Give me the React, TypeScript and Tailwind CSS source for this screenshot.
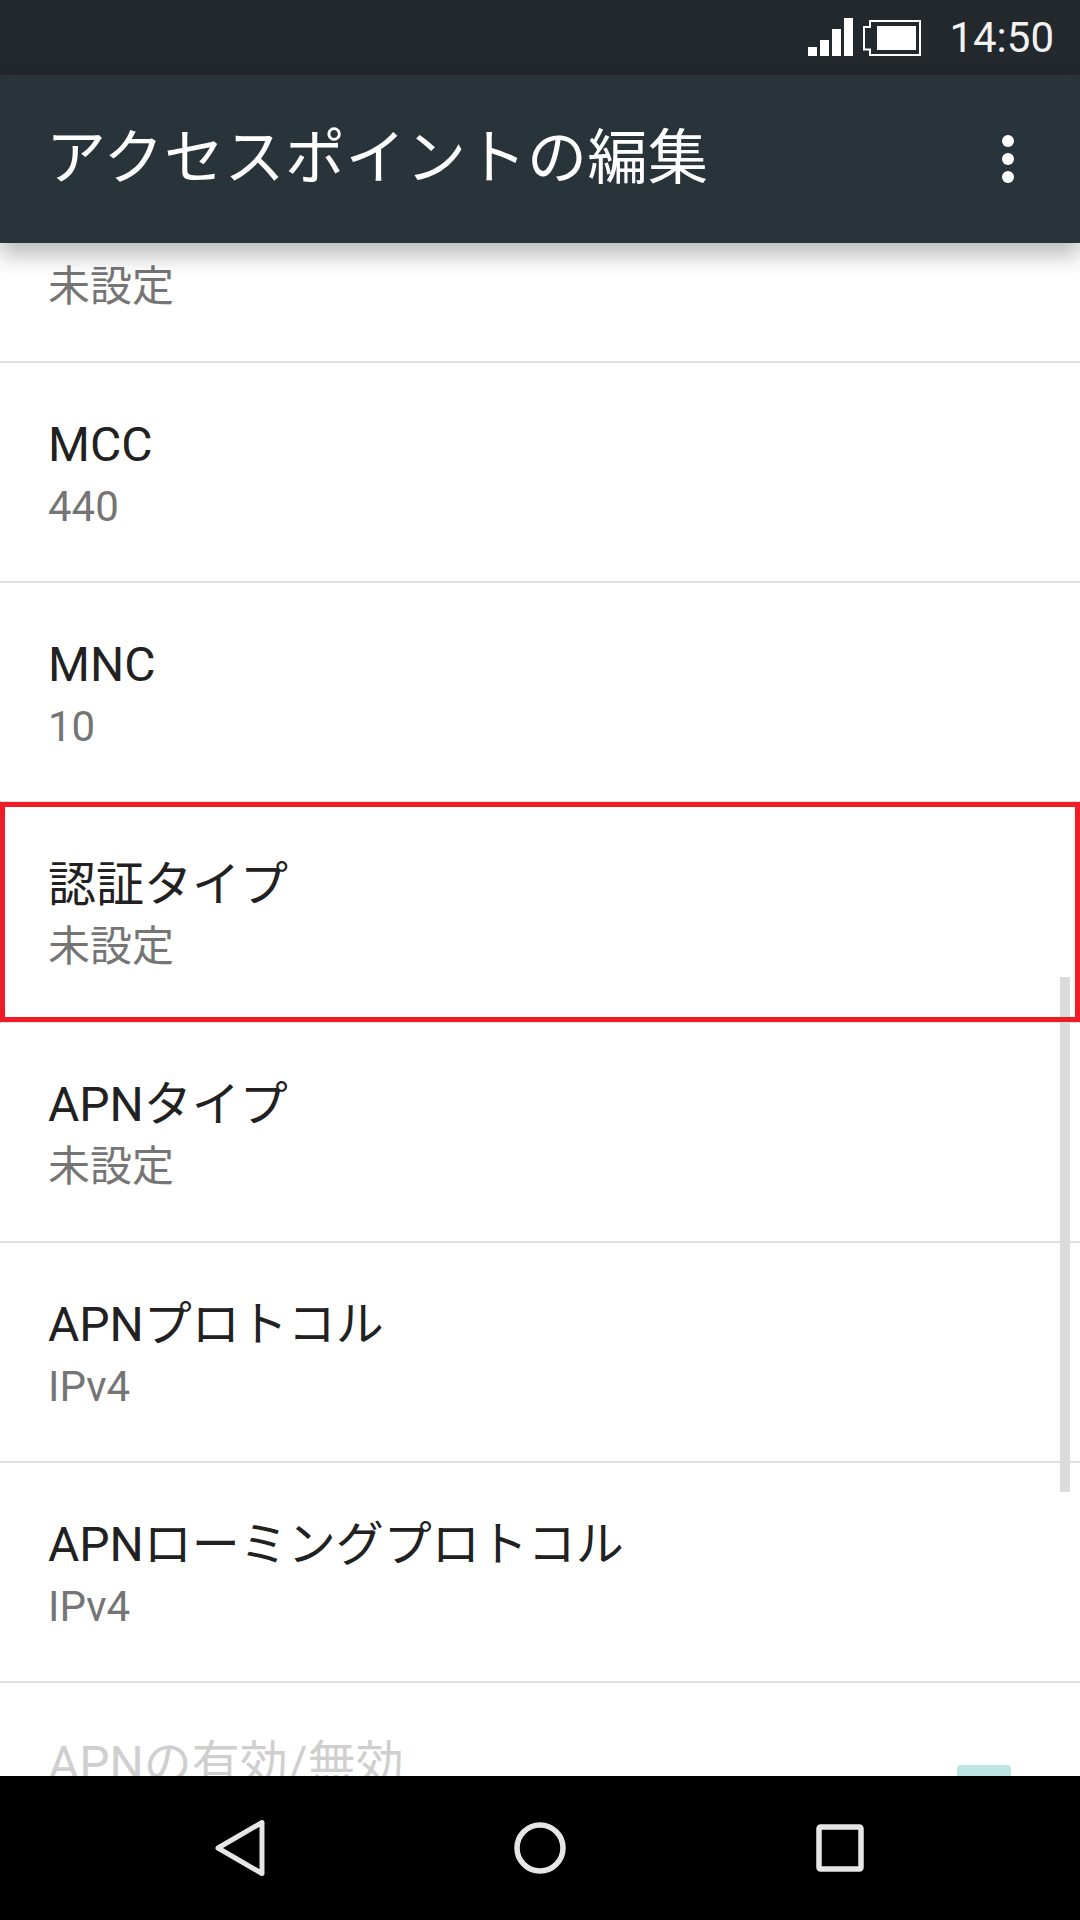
const FONT = "font-['Roboto','Noto_Sans_CJK_JP',sans-serif]";

type RowProps = { title: string; summary: string };

function Row({ title, summary }: RowProps) {
  return (
    <div className="h-[220px] border-b-2 border-[#e0e0e0] pl-[48px] pt-[51px]">
      <div className="text-[48px] leading-[62px] text-[#212121]">{title}</div>
      <div className="relative top-[1px] text-[42px] leading-[60px] text-[#757575]">{summary}</div>
    </div>
  );
}

export default function App() {
  const rows: RowProps[] = [
    { title: "MCC", summary: "440" },
    { title: "MNC", summary: "10" },
    { title: "認証タイプ", summary: "未設定" },
    { title: "APNタイプ", summary: "未設定" },
    { title: "APNプロトコル", summary: "IPv4" },
    { title: "APNローミングプロトコル", summary: "IPv4" },
  ];
  return (
    <div className={`${FONT} relative flex h-[1920px] w-[1080px] flex-col overflow-hidden bg-white`}>
      <div className="flex h-[75px] shrink-0 items-center justify-end bg-[#22282c] pr-[26px]">
        <svg width="45" height="38" viewBox="0 0 45 38" className="mb-[1px] mr-[10px]">
          <rect x="0" y="29" width="9" height="9" fill="#fff" />
          <rect x="12" y="22" width="9" height="16" fill="#fff" />
          <rect x="24" y="11" width="9" height="27" fill="#fff" />
          <rect x="36" y="0" width="9" height="38" fill="#fff" />
        </svg>
        <svg width="58" height="36" viewBox="0 0 58 36" className="mr-[28px]">
          <path d="M7 1 H57 V35 H7 V29.5 H1 V7 H7 Z" fill="none" stroke="#fff" strokeWidth="2" />
          <rect x="14" y="6" width="39" height="24" fill="#fff" />
        </svg>
        <span className="text-[42px] leading-none text-[#f2f2f2]">14:50</span>
      </div>

      <div className="relative z-10 flex h-[168px] shrink-0 items-center justify-between bg-[#29333a] pl-[46px] pr-[66px] shadow-[0_12px_22px_rgba(0,0,0,0.28)]">
        <span className="text-[60px] leading-none tracking-[0.5px] text-white">アクセスポイントの編集</span>
        <svg width="12" height="48" viewBox="0 0 12 48">
          <circle cx="6" cy="6" r="6" fill="#fff" />
          <circle cx="6" cy="24" r="6" fill="#fff" />
          <circle cx="6" cy="42" r="6" fill="#fff" />
        </svg>
      </div>

      <div className="relative min-h-0 flex-1 overflow-hidden">
        <div className="h-[120px] border-b-2 border-[#e0e0e0] pl-[48px] pt-[14px] text-[42px] leading-[60px] text-[#757575]">
          未設定
        </div>
        {rows.map((r) => (
          <Row key={r.title} {...r} />
        ))}
        <div className="flex h-[220px] items-start justify-between pl-[48px] pr-[69px] pt-[50px]">
          <div className="text-[48px] leading-[62px] text-[#cfcfcf]">APNの有効/無効</div>
          <div className="mt-[32px] h-[40px] w-[54px] rounded-[4px] bg-[#bde5e1]" />
        </div>

        <div className="absolute left-[1060px] top-[734px] h-[515px] w-[10px] bg-[#dbdbdb]" />
        <div className="absolute left-0 top-[559px] h-[220px] w-[1080px] border-[5px] border-[#ee1c25]" />
      </div>

      <div className="relative z-10 grid h-[144px] shrink-0 grid-cols-3 items-center bg-black px-[90px]">
        <div className="flex justify-center">
          <svg width="52" height="58" viewBox="0 0 52 58">
            <path d="M48 3.5 V54.5 L4 29 Z" fill="none" stroke="#e6e6e6" strokeWidth="5" strokeLinejoin="round" />
          </svg>
        </div>
        <div className="flex justify-center">
          <svg width="52" height="52" viewBox="0 0 52 52">
            <circle cx="26" cy="26" r="23" fill="none" stroke="#e6e6e6" strokeWidth="5.5" />
          </svg>
        </div>
        <div className="flex justify-center">
          <svg width="48" height="48" viewBox="0 0 48 48">
            <rect x="3" y="3" width="42" height="42" rx="1.5" fill="none" stroke="#e6e6e6" strokeWidth="5.5" />
          </svg>
        </div>
      </div>
    </div>
  );
}
